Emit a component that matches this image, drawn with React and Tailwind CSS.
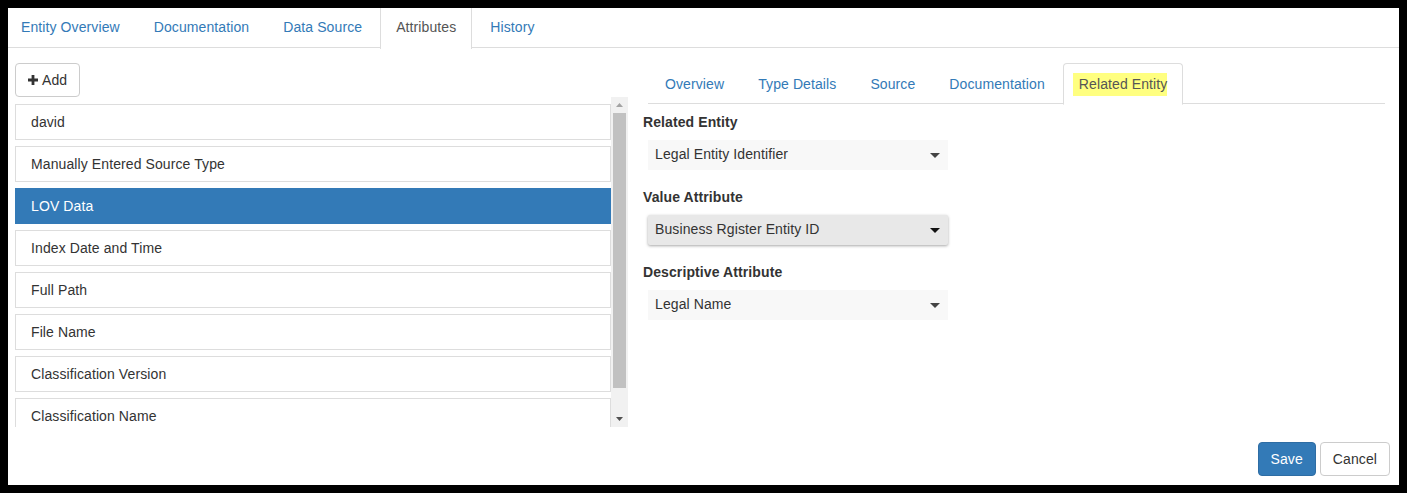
import React from 'react';

const mainTabs = ['Entity Overview', 'Documentation', 'Data Source', 'Attributes', 'History'];
const subTabs = ['Overview', 'Type Details', 'Source', 'Documentation', 'Related Entity'];
const attributes = [
  'david',
  'Manually Entered Source Type',
  'LOV Data',
  'Index Date and Time',
  'Full Path',
  'File Name',
  'Classification Version',
  'Classification Name',
];

function Caret({ dark }) {
  return (
    <svg width="10" height="5" viewBox="0 0 10 5" className="shrink-0 mt-[3px]">
      <path d="M0 0 L10 0 L5 5 Z" fill={dark ? '#111' : '#444'} />
    </svg>
  );
}

function Select({ value, focused }) {
  return (
    <div
      className={`w-[300px] h-[30px] ml-[5px] flex items-center justify-between pl-[7px] pr-[8px] pb-[2px] text-[14px] text-[#333] ${
        focused ? 'bg-[#e8e8e8] rounded-[2px] shadow-[0_1px_3px_rgba(0,0,0,0.35)]' : 'bg-[#f8f8f8]'
      }`}
    >
      <span>{value}</span>
      <Caret dark={focused} />
    </div>
  );
}

export default function App() {
  return (
    <div className="w-[1407px] h-[493px] bg-black p-2 font-['Liberation_Sans',Arial,sans-serif] text-[14px] text-[#333] tracking-[0.1px]">
      <div className="w-full h-full bg-white flex flex-col">
        {/* main tabs */}
        <div className="h-[40px] flex border-b border-[#ddd] shrink-0">
          {mainTabs.map((t, i) => {
            const active = t === 'Attributes';
            return (
              <div
                key={t}
                className={`flex items-center mr-[2px] leading-[20px] ${i === 0 ? 'pl-[12px] pr-[15px]' : 'px-[15px]'} ${
                  active
                    ? 'border-l border-r border-[#ddd] bg-white text-[#555] -mb-px h-[41px] pb-[3px]'
                    : 'text-[#337ab7] border-l border-r border-transparent h-[40px] pb-[2px]'
                }`}
              >
                {t}
              </div>
            );
          })}
        </div>

        {/* body */}
        <div className="flex pt-[15px] pl-[7px]">
          {/* left column */}
          <div className="w-[613px] shrink-0 flex flex-col">
            <div>
              <button
                type="button"
                className="h-[34px] px-[12px] flex items-center gap-[4px] border border-[#ccc] rounded-[4px] bg-white text-[#333] leading-[20px]"
              >
                <svg width="10" height="10" viewBox="0 0 10 10">
                  <path d="M3.6 0 H6.4 V3.6 H10 V6.4 H6.4 V10 H3.6 V6.4 H0 V3.6 H3.6 Z" fill="#333" />
                </svg>
                Add
              </button>
            </div>
            <div className="h-[330px] flex overflow-hidden">
              <div className="flex-1 flex flex-col gap-[6px] pt-[7px] overflow-hidden">
                {attributes.map((a) => {
                  const active = a === 'LOV Data';
                  return (
                    <div
                      key={a}
                      className={`h-[36px] shrink-0 flex items-center pl-[15px] border ${
                        active ? 'bg-[#337ab7] border-[#337ab7] text-white' : 'bg-white border-[#ddd] text-[#333]'
                      }`}
                    >
                      {a}
                    </div>
                  );
                })}
              </div>
              {/* scrollbar */}
              <div className="w-[17px] shrink-0 bg-[#f1f1f1] flex flex-col items-center">
                <div className="h-[16px] flex items-center justify-center">
                  <svg width="7" height="4" viewBox="0 0 7 4">
                    <path d="M0 4 L3.5 0 L7 4 Z" fill="#a3a3a3" />
                  </svg>
                </div>
                <div className="w-[13px] h-[275px] bg-[#c1c1c1]" />
                <div className="flex-1" />
                <div className="h-[16px] flex items-center justify-center">
                  <svg width="7" height="4" viewBox="0 0 7 4">
                    <path d="M0 0 L7 0 L3.5 4 Z" fill="#505050" />
                  </svg>
                </div>
              </div>
            </div>
          </div>

          {/* right column */}
          <div className="flex-1 ml-[15px] mr-[14px] flex flex-col">
            <div className="ml-[5px] h-[41px] flex border-b border-[#ddd]">
              {subTabs.map((t, i) => {
                const active = t === 'Related Entity';
                return (
                  <div
                    key={t}
                    className={`h-[41px] flex items-center px-[15px] mr-[2px] leading-[20px] ${i === 0 ? 'pl-[16px]' : ''} ${
                      active
                        ? 'border border-[#ddd] border-b-white rounded-t-[4px] bg-white text-[#555] -mb-px h-[42px]'
                        : 'text-[#337ab7] border border-transparent'
                    }`}
                  >
                    {active ? (
                      <span className="inline-block h-[23px] leading-[23px] pl-[6px] -ml-[6px] bg-[#ffff80] text-[#555]">{t}</span>
                    ) : (
                      t
                    )}
                  </div>
                );
              })}
            </div>

            <div className="pt-[8px] flex flex-col">
              <div className="font-bold leading-[20px] mb-[8px]">Related Entity</div>
              <Select value="Legal Entity Identifier" />
              <div className="font-bold leading-[20px] mb-[8px] mt-[17px]">Value Attribute</div>
              <Select value="Business Rgister Entity ID" focused />
              <div className="font-bold leading-[20px] mb-[8px] mt-[17px]">Descriptive Attribute</div>
              <Select value="Legal Name" />
            </div>
          </div>
        </div>

        {/* footer */}
        <div className="mt-[15px] pr-[9px] flex justify-end gap-[4px]">
          <button
            type="button"
            className="h-[34px] px-[12px] rounded-[4px] bg-[#337ab7] border border-[#2e6da4] text-white leading-[20px]"
          >
            Save
          </button>
          <button
            type="button"
            className="h-[34px] px-[12px] rounded-[4px] bg-white border border-[#ccc] text-[#333] leading-[20px]"
          >
            Cancel
          </button>
        </div>
      </div>
    </div>
  );
}
